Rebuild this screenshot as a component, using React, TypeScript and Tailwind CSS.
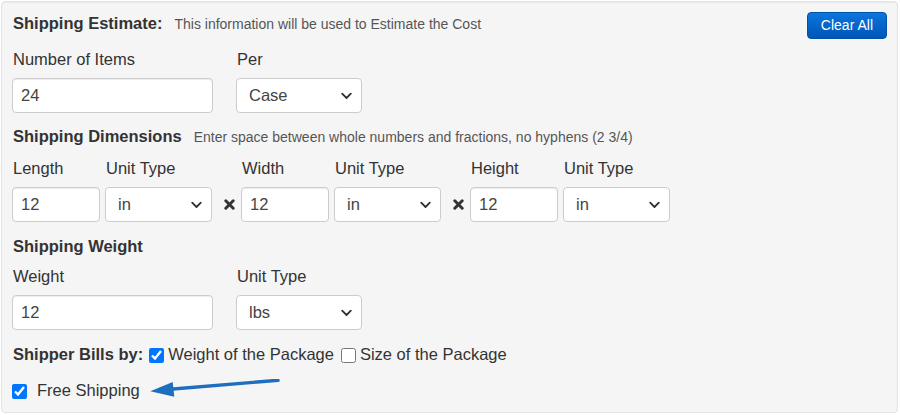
import type { ReactNode } from 'react';

function Chevron() {
  return (
    <svg
      className="pointer-events-none absolute right-[10px] top-1/2 -translate-y-1/2"
      width="11"
      height="7"
      viewBox="0 0 11 7"
      fill="none"
      stroke="#333"
      strokeWidth="1.8"
      strokeLinecap="round"
      strokeLinejoin="round"
    >
      <path d="M1.2 1.2l4.3 4.3 4.3-4.3" />
    </svg>
  );
}

function TextBox({ value, width }: { value: string; width: string }) {
  return (
    <input
      readOnly
      defaultValue={value}
      className={`${width} h-[35px] rounded-[4px] border border-[#ccc] bg-white pl-[8px] text-[16.5px] text-[#444] shadow-[inset_0_1px_1px_rgba(0,0,0,0.075)] outline-none`}
    />
  );
}

function SelectBox({ value, width }: { value: string; width: string }) {
  return (
    <div className={`relative ${width} h-[35px]`}>
      <select
        defaultValue={value}
        className="h-full w-full appearance-none rounded-[4px] border border-[#ccc] bg-white pl-[12px] text-[16.5px] text-[#444] outline-none"
      >
        <option value={value}>{value}</option>
      </select>
      <Chevron />
    </div>
  );
}

function Field({ label, children }: { label: string; children: ReactNode }) {
  return (
    <div className="flex flex-col">
      <span className="mb-[8px] h-[22px] pl-[1px] leading-[22px]">{label}</span>
      {children}
    </div>
  );
}

function Times() {
  return (
    <div className="ml-[12px] mr-[6px] flex h-[35px] w-[11px] items-center self-end">
      <svg width="11" height="11" viewBox="0 0 11 11" stroke="#333" strokeWidth="3" strokeLinecap="round">
        <path d="M1.8 1.8l7.4 7.4M9.2 1.8l-7.4 7.4" />
      </svg>
    </div>
  );
}

function Heading({ title, note }: { title: string; note?: string }) {
  return (
    <div className="flex h-[22px] items-baseline leading-[22px]">
      <span className="pl-[1px] font-bold">{title}</span>
      {note && <span className="ml-[12px] text-[14px] text-[#555]">{note}</span>}
    </div>
  );
}

export default function App() {
  return (
    <div className="h-[415px] w-[900px] bg-white pl-[1px] pt-[1px] font-['Liberation_Sans',Arial,sans-serif] text-[16.5px] text-[#333]">
      <div className="h-[412px] w-[897px] rounded-[4px] border border-[#e3e3e3] bg-[#f5f5f5] pl-[10px] pr-[10px] pt-[10px] shadow-[inset_0_1px_1px_rgba(0,0,0,0.05)]">
        {/* estimate header */}
        <div className="flex items-start justify-between">
          <Heading title="Shipping Estimate:" note="This information will be used to Estimate the Cost" />
          <button className="h-[27px] rounded-[4px] border border-[#0050a8] bg-linear-to-b from-[#0c76de] to-[#0055b6] px-[13px] text-[14px] text-white">
            Clear All
          </button>
        </div>

        <div className="mt-[9px] flex gap-[23px]">
          <Field label="Number of Items">
            <TextBox value="24" width="w-[201px]" />
          </Field>
          <Field label="Per">
            <SelectBox value="Case" width="w-[126px]" />
          </Field>
        </div>

        {/* dimensions */}
        <div className="mt-[12px]">
          <Heading title="Shipping Dimensions" note="Enter space between whole numbers and fractions, no hyphens (2 3/4)" />
        </div>
        <div className="mt-[10px] flex">
          {['Length', 'Width', 'Height'].map((dim, i) => (
            <div key={dim} className="flex">
              <Field label={dim}>
                <TextBox value="12" width="w-[88px]" />
              </Field>
              <div className="ml-[5px]">
                <Field label="Unit Type">
                  <SelectBox value="in" width="w-[107px]" />
                </Field>
              </div>
              {i < 2 && <Times />}
            </div>
          ))}
        </div>

        {/* weight */}
        <div className="mt-[13px]">
          <Heading title="Shipping Weight" />
        </div>
        <div className="mt-[8px] flex gap-[23px]">
          <Field label="Weight">
            <TextBox value="12" width="w-[201px]" />
          </Field>
          <Field label="Unit Type">
            <SelectBox value="lbs" width="w-[126px]" />
          </Field>
        </div>

        <div className="mt-[13px] flex h-[22px] items-center leading-[22px]">
          <span className="pl-[1px] font-bold">Shipper Bills by:</span>
          <input type="checkbox" defaultChecked className="m-0 ml-[6px] mt-[3px] h-[15px] w-[15px] accent-[#0075ff]" />
          <span className="ml-[4px]">Weight of the Package</span>
          <input type="checkbox" className="m-0 ml-[7px] mt-[3px] h-[15px] w-[15px]" />
          <span className="ml-[4px]">Size of the Package</span>
        </div>

        <div className="mt-[14px] flex h-[22px] items-center leading-[22px]">
          <input type="checkbox" defaultChecked className="m-0 mt-[2px] h-[15px] w-[15px] accent-[#0075ff]" />
          <span className="ml-[10px]">Free Shipping</span>
          <svg className="ml-[10px] self-start" width="132" height="20" viewBox="0 0 132 20" fill="#1f6dbd">
            <path d="M20 10.2L128 1.3" stroke="#1f6dbd" strokeWidth="3.4" strokeLinecap="round" />
            <path d="M0.3 12.2L22.7 3L24.3 17.7Z" />
          </svg>
        </div>
      </div>
    </div>
  );
}
